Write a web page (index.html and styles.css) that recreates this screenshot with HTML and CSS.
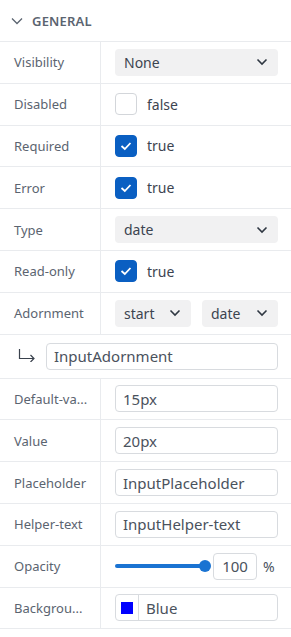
FILE: index.html
```html
<!DOCTYPE html>
<html lang="en">
<head>
    <meta charset="UTF-8">
    <meta name="viewport" content="width=device-width, initial-scale=1.0">
    <title>General properties</title>
    <link rel="stylesheet" href="styles.css">
</head>
<body>
    <div class="panel">
        <div class="section-head">
            <svg class="head-chevron" width="12" height="8" viewBox="0 0 12 8"><path d="M1 1.5 L6 6.5 L11 1.5" fill="none" stroke="#5b6470" stroke-width="1.3"/></svg>
            <span>GENERAL</span>
        </div>

        <div class="row">
            <div class="label">Visibility</div>
            <div class="value">
                <div class="select full"><span>None</span><svg width="12" height="8" viewBox="0 0 12 8"><path d="M1.5 1.5 L6 6 L10.5 1.5" fill="none" stroke="#2f3742" stroke-width="1.6"/></svg></div>
            </div>
        </div>

        <div class="row">
            <div class="label">Disabled</div>
            <div class="value">
                <span class="check"></span><span class="check-text">false</span>
            </div>
        </div>

        <div class="row">
            <div class="label">Required</div>
            <div class="value">
                <span class="check on"><svg width="12" height="10" viewBox="0 0 12 10"><path d="M1.5 5 L4.8 8 L10.5 2" fill="none" stroke="#fff" stroke-width="1.8"/></svg></span><span class="check-text">true</span>
            </div>
        </div>

        <div class="row">
            <div class="label">Error</div>
            <div class="value">
                <span class="check on"><svg width="12" height="10" viewBox="0 0 12 10"><path d="M1.5 5 L4.8 8 L10.5 2" fill="none" stroke="#fff" stroke-width="1.8"/></svg></span><span class="check-text">true</span>
            </div>
        </div>

        <div class="row">
            <div class="label">Type</div>
            <div class="value">
                <div class="select full"><span>date</span><svg width="12" height="8" viewBox="0 0 12 8"><path d="M1.5 1.5 L6 6 L10.5 1.5" fill="none" stroke="#2f3742" stroke-width="1.6"/></svg></div>
            </div>
        </div>

        <div class="row">
            <div class="label">Read-only</div>
            <div class="value">
                <span class="check on"><svg width="12" height="10" viewBox="0 0 12 10"><path d="M1.5 5 L4.8 8 L10.5 2" fill="none" stroke="#fff" stroke-width="1.8"/></svg></span><span class="check-text">true</span>
            </div>
        </div>

        <div class="row">
            <div class="label">Adornment</div>
            <div class="value pair">
                <div class="select"><span>start</span><svg width="12" height="8" viewBox="0 0 12 8"><path d="M1.5 1.5 L6 6 L10.5 1.5" fill="none" stroke="#2f3742" stroke-width="1.6"/></svg></div>
                <div class="select"><span>date</span><svg width="12" height="8" viewBox="0 0 12 8"><path d="M1.5 1.5 L6 6 L10.5 1.5" fill="none" stroke="#2f3742" stroke-width="1.6"/></svg></div>
            </div>
        </div>

        <div class="row sub">
            <svg class="sub-arrow" width="18" height="14" viewBox="0 0 18 14"><path d="M1.5 1 V10.5 H16 M12.5 7 L16 10.5 L12.5 14" fill="none" stroke="#3a424d" stroke-width="1.2"/></svg>
            <div class="input">InputAdornment</div>
        </div>

        <div class="row">
            <div class="label">Default-va...</div>
            <div class="value"><div class="input">15px</div></div>
        </div>

        <div class="row">
            <div class="label">Value</div>
            <div class="value"><div class="input">20px</div></div>
        </div>

        <div class="row">
            <div class="label">Placeholder</div>
            <div class="value"><div class="input">InputPlaceholder</div></div>
        </div>

        <div class="row">
            <div class="label">Helper-text</div>
            <div class="value"><div class="input">InputHelper-text</div></div>
        </div>

        <div class="row">
            <div class="label">Opacity</div>
            <div class="value opacity">
                <div class="slider"><div class="track"></div><div class="thumb"></div></div>
                <div class="input num">100</div>
                <span class="unit">%</span>
            </div>
        </div>

        <div class="row">
            <div class="label">Backgrou...</div>
            <div class="value">
                <div class="input color">
                    <span class="swatch-box"><span class="swatch"></span></span>
                    <span class="color-name">Blue</span>
                </div>
            </div>
        </div>
    </div>
</body>
</html>
```

FILE: styles.css
```css
body {
    margin: 0;
    background: #fff;
    font-family: "Noto Sans", "Open Sans", sans-serif;
    color: #3c4450;
}
.panel {
    width: 291px;
}
.section-head {
    display: flex;
    align-items: center;
    height: 42px;
    border-bottom: 1px solid #e9ebee;
    box-sizing: border-box;
    padding-left: 11px;
    font-size: 13px;
    font-weight: 600;
    color: #5b6470;
    letter-spacing: 0.2px;
}
.head-chevron {
    margin-right: 9px;
}
.row {
    display: grid;
    grid-template-columns: 101px 1fr;
    height: 41.8px;
    box-sizing: border-box;
    border-bottom: 1px solid #e9ebee;
}
.label {
    display: flex;
    align-items: center;
    padding-left: 14px;
    border-right: 1px solid #e9ebee;
    font-size: 13px;
    color: #5b6470;
    white-space: nowrap;
}
.value {
    display: flex;
    align-items: center;
    padding: 0 13px 0 14px;
    min-width: 0;
}
.select {
    display: flex;
    align-items: center;
    justify-content: space-between;
    height: 27px;
    padding: 0 10px 0 9px;
    background: #f1f1f2;
    border-radius: 4px;
    font-size: 14px;
    color: #3c4450;
    box-sizing: border-box;
}
.select.full {
    flex: 1;
}
.pair {
    gap: 11px;
}
.pair .select {
    flex: 1;
}
.check {
    display: inline-flex;
    align-items: center;
    justify-content: center;
    width: 22px;
    height: 22px;
    border: 1px solid #d3d6da;
    border-radius: 4px;
    box-sizing: border-box;
    background: #fff;
}
.check.on {
    background: #0a5fc2;
    border-color: #0a5fc2;
}
.check-text {
    margin-left: 10px;
    font-size: 14px;
    color: #3c4450;
}
.input {
    flex: 1;
    display: flex;
    align-items: center;
    height: 27px;
    padding: 0 7px;
    border: 1px solid #d8dbdf;
    border-radius: 4px;
    box-sizing: border-box;
    font-size: 15px;
    color: #4a525d;
    white-space: nowrap;
    overflow: hidden;
}
.row.sub {
    display: flex;
    align-items: center;
    height: 44px;
    padding: 0 13px 0 18px;
}
.sub-arrow {
    margin-right: 10px;
    margin-top: -2px;
}
.opacity .slider {
    position: relative;
    width: 96px;
    height: 12px;
    flex: none;
}
.slider .track {
    position: absolute;
    left: 0;
    right: 6px;
    top: 4px;
    height: 4px;
    border-radius: 2px;
    background: #1a73d2;
}
.slider .thumb {
    position: absolute;
    right: 0;
    top: 0;
    width: 12px;
    height: 12px;
    border-radius: 50%;
    background: #1a73d2;
}
.input.num {
    flex: none;
    width: 44px;
    margin-left: 2px;
    justify-content: center;
}
.unit {
    margin-left: 6px;
    font-size: 14px;
    color: #4a525d;
}
.input.color {
    padding: 0;
}
.swatch-box {
    display: flex;
    align-items: center;
    justify-content: center;
    width: 22px;
    height: 100%;
    border-right: 1px solid #d8dbdf;
}
.swatch {
    width: 12px;
    height: 12px;
    background: #0000ff;
}
.color-name {
    margin-left: 7px;
}
```
